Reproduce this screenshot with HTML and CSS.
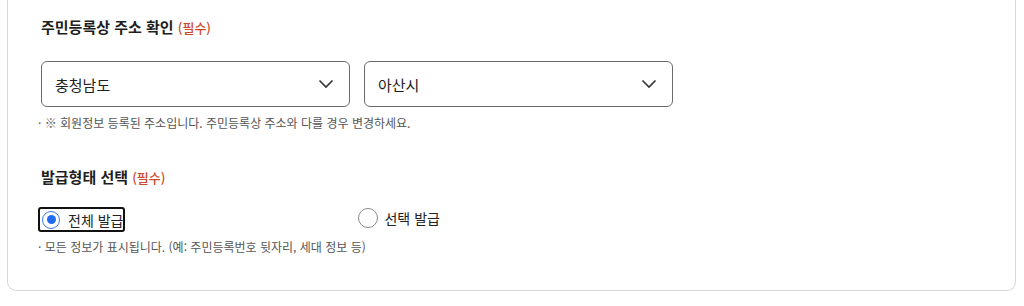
FILE: index.html
```html
<html lang="ko">
<head>
    <meta charset="UTF-8">
    <meta name="viewport" content="width=device-width, initial-scale=1.0">
    <title>주민등록 발급 신청</title>
    <link rel="stylesheet" href="styles.css">
</head>
<body>
    <div class="card">
        <div class="field">
            <h3 class="label">주민등록상 주소 확인 <span class="req">(필수)</span></h3>
            <div class="selects">
                <div class="select">
                    <span>충청남도</span>
                    <svg width="16" height="10" viewBox="0 0 16 10"><path d="M1.5 1.5 L8 8 L14.5 1.5" fill="none" stroke="#333" stroke-width="1.6"/></svg>
                </div>
                <div class="select">
                    <span>아산시</span>
                    <svg width="16" height="10" viewBox="0 0 16 10"><path d="M1.5 1.5 L8 8 L14.5 1.5" fill="none" stroke="#333" stroke-width="1.6"/></svg>
                </div>
            </div>
            <p class="hint">· ※ 회원정보 등록된 주소입니다. 주민등록상 주소와 다를 경우 변경하세요.</p>
        </div>

        <div class="field second">
            <h3 class="label">발급형태 선택 <span class="req">(필수)</span></h3>
            <div class="radios">
                <label class="radio focused">
                    <input type="radio" name="type" checked> 전체 발급
                </label>
                <label class="radio">
                    <input type="radio" name="type"> 선택 발급
                </label>
            </div>
            <p class="hint tight">· 모든 정보가 표시됩니다. (예: 주민등록번호 뒷자리, 세대 정보 등)</p>
        </div>
    </div>
</body>
</html>
```

FILE: styles.css
```css
body {
    margin: 0;
    background: #fff;
    font-family: "Noto Sans CJK KR", "Noto Sans", sans-serif;
    color: #222;
}

.card {
    margin: 0 8px 0 7px;
    padding: 15px 32px 0 33px;
    border: 1px solid #d3d7db;
    border-top: none;
    border-radius: 0 0 9px 9px;
    height: 275px;
}

.label {
    margin: 0;
    font-size: 15px;
    line-height: 24px;
    font-weight: 700;
    color: #1e1e1e;
}

.req {
    font-size: 13px;
    font-weight: 500;
    color: #cc4a2c;
}

.selects {
    display: flex;
    gap: 14px;
    margin-top: 21px;
}

.select {
    width: 279px;
    height: 44px;
    border: 1px solid #6a6a6a;
    border-radius: 6px;
    display: flex;
    align-items: center;
    justify-content: space-between;
    padding: 0 15px 0 13px;
    font-size: 15px;
    color: #222;
}

.hint {
    margin: 7px 0 0 -3px;
    font-size: 12px;
    line-height: 18px;
    color: #555;
}

.hint.tight {
    margin-top: 6px;
}

.second {
    margin-top: 33px;
}

.radios {
    display: flex;
    margin-top: 17px;
    margin-left: -3px;
}

.radio {
    display: flex;
    align-items: center;
    gap: 6px;
    height: 21px;
    font-size: 14px;
    color: #222;
    white-space: nowrap;
}

.radio.focused {
    padding: 0 0 0 2px;
    border: 2px solid #111;
    border-radius: 3px;
    margin-right: 233px;
    gap: 8px;
}

.radio input {
    appearance: none;
    margin: 0;
    width: 18px;
    height: 18px;
    border: 1px solid #8a8a8a;
    border-radius: 50%;
    box-sizing: border-box;
    display: grid;
    place-items: center;
}

.radio input:checked {
    border-color: #3a78e8;
}

.radio input:checked::after {
    content: "";
    width: 9px;
    height: 9px;
    border-radius: 50%;
    background: #1f6cf0;
}

.radio:not(.focused) input {
    width: 20px;
    height: 20px;
}
```
